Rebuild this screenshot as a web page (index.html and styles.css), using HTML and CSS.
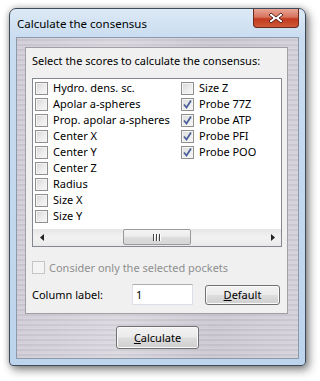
FILE: index.html
```html
<!DOCTYPE html>
<html>
<head>
<meta charset="utf-8">
<link rel="stylesheet" href="styles.css">
</head>
<body>
<div class="window">
  <div class="titlebar">
    <span class="title">Calculate the consensus</span>
    <div class="close">
      <svg width="16" height="12" viewBox="0 0 16 12">
        <path d="M3 1 L8 5 L13 1 L15 3 L11 6 L15 9 L13 11 L8 7 L3 11 L1 9 L5 6 L1 3 Z" fill="#fff" stroke="#5a2a22" stroke-width="1" stroke-linejoin="round"/>
      </svg>
    </div>
  </div>
  <div class="client">
    <div class="panel">
      <div class="prompt">Select the scores to calculate the consensus:</div>
      <div class="listbox">
        <div class="items">
          <div class="item"><span class="cb"></span>Hydro. dens. sc.</div>
          <div class="item"><span class="cb"></span>Apolar a-spheres</div>
          <div class="item"><span class="cb"></span>Prop. apolar a-spheres</div>
          <div class="item"><span class="cb"></span>Center X</div>
          <div class="item"><span class="cb"></span>Center Y</div>
          <div class="item"><span class="cb"></span>Center Z</div>
          <div class="item"><span class="cb"></span>Radius</div>
          <div class="item"><span class="cb"></span>Size X</div>
          <div class="item"><span class="cb"></span>Size Y</div>
          <div class="item"><span class="cb"></span>Size Z</div>
          <div class="item"><span class="cb checked"><svg width="11" height="11" viewBox="0 0 11 11"><path d="M2 5.5 L4.5 8.5 L9 1.5" fill="none" stroke="#4c6199" stroke-width="1.8"/></svg></span>Probe 77Z</div>
          <div class="item"><span class="cb checked"><svg width="11" height="11" viewBox="0 0 11 11"><path d="M2 5.5 L4.5 8.5 L9 1.5" fill="none" stroke="#4c6199" stroke-width="1.8"/></svg></span>Probe ATP</div>
          <div class="item"><span class="cb checked"><svg width="11" height="11" viewBox="0 0 11 11"><path d="M2 5.5 L4.5 8.5 L9 1.5" fill="none" stroke="#4c6199" stroke-width="1.8"/></svg></span>Probe PFI</div>
          <div class="item"><span class="cb checked"><svg width="11" height="11" viewBox="0 0 11 11"><path d="M2 5.5 L4.5 8.5 L9 1.5" fill="none" stroke="#4c6199" stroke-width="1.8"/></svg></span>Probe POO</div>
        </div>
        <div class="hscroll">
          <span class="arrow"><svg width="4" height="7" viewBox="0 0 4 7"><path d="M4 0 L0 3.5 L4 7 Z" fill="#222"/></svg></span>
          <div class="track">
            <div class="thumb"><span class="grip"></span><span class="grip"></span><span class="grip"></span></div>
          </div>
          <span class="arrow"><svg width="4" height="7" viewBox="0 0 4 7"><path d="M0 0 L4 3.5 L0 7 Z" fill="#222"/></svg></span>
        </div>
      </div>
      <div class="consider"><span class="cb disabled"></span>Consider only the selected pockets</div>
      <div class="labelrow">
        <span class="collabel">Column label:</span>
        <div class="input">1</div>
        <div class="button default-btn"><u>D</u>efault</div>
      </div>
    </div>
    <div class="footer">
      <div class="button calc-btn"><u>C</u>alculate</div>
    </div>
  </div>
</div>
</body>
</html>
```
FILE: styles.css
```css
html, body {
  margin: 0;
  padding: 0;
  background: #ffffff;
  width: 320px;
  height: 381px;
  overflow: hidden;
}
body {
  padding: 8px 0 0 9px;
  box-sizing: border-box;
  font-family: "Noto Sans", "Open Sans", sans-serif;
  font-size: 11px;
  color: #000;
}
.window {
  width: 297px;
  height: 358px;
  box-sizing: border-box;
  border: 1px solid #3e4a58;
  border-radius: 7px 7px 4px 4px;
  background: linear-gradient(180deg, #dce9f6 0px, #c9dcf0 30px, #bcd4ec 100%);
  box-shadow: 3px 4px 10px rgba(0, 0, 0, 0.45), 0 0 6px rgba(0, 0, 0, 0.25);
  display: flex;
  flex-direction: column;
  padding: 0 6px 6px 6px;
}
.titlebar {
  height: 28px;
  display: flex;
  align-items: flex-start;
  justify-content: space-between;
}
.title {
  margin-top: 7px;
  margin-left: 1px;
  font-size: 11.5px;
  line-height: 16px;
  color: #000;
}
.close {
  width: 46px;
  height: 19px;
  box-sizing: border-box;
  border: 1px solid #6b2a1e;
  border-top: none;
  border-radius: 0 0 4px 4px;
  background: linear-gradient(180deg, #e9a596 0%, #d8735e 45%, #c2391f 55%, #cf5a3a 100%);
  display: flex;
  align-items: center;
  justify-content: center;
}
.client {
  flex: 1;
  border: 1px solid #8b99ab;
  background-color: #cdcad4;
  background-image:
    repeating-linear-gradient(180deg, rgba(255,255,255,0.12) 0px, rgba(255,255,255,0.12) 1px, rgba(0,0,0,0.04) 1px, rgba(0,0,0,0.04) 3px, rgba(255,255,255,0.06) 3px, rgba(255,255,255,0.06) 5px),
    linear-gradient(90deg, #cfccd6 0%, #dad7df 35%, #cbc8d2 70%, #d3d0d9 100%);
  display: flex;
  flex-direction: column;
  padding: 9px 0 0 8px;
}
.panel {
  width: 263px;
  height: 267px;
  box-sizing: border-box;
  border: 1px solid #a0a0a4;
  background: #f0f0f0;
  padding: 5px 0 0 6px;
  display: flex;
  flex-direction: column;
}
.prompt {
  line-height: 16px;
  height: 16px;
}
.listbox {
  margin-top: 9px;
  width: 250px;
  height: 169px;
  box-sizing: border-box;
  border: 1px solid #828790;
  background: #fff;
  display: flex;
  flex-direction: column;
}
.items {
  flex: 1;
  display: grid;
  grid-template-rows: repeat(9, 16px);
  grid-auto-flow: column;
  grid-auto-columns: 146px;
  padding: 1px 0 0 2px;
  overflow: hidden;
}
.item {
  display: flex;
  align-items: center;
  white-space: nowrap;
  line-height: 16px;
}
.cb {
  width: 13px;
  height: 13px;
  box-sizing: border-box;
  border: 1px solid #8f8f8f;
  background: linear-gradient(135deg, #d8d8d8 0%, #ededed 60%, #f6f6f6 100%);
  box-shadow: inset 0 0 0 1px #f4f4f4;
  margin-right: 5px;
  flex: none;
  display: flex;
  align-items: center;
  justify-content: center;
}
.cb.checked {
  background: linear-gradient(135deg, #dcdcdc 0%, #f0f0f0 70%, #f8f8f8 100%);
}
.cb.disabled {
  border-color: #c5c5c5;
  background: #f4f4f4;
  box-shadow: none;
}
.hscroll {
  height: 17px;
  display: flex;
  align-items: center;
  background: linear-gradient(180deg, #e6e6e6 0%, #f2f2f2 50%, #eaeaea 100%);
}
.arrow {
  width: 17px;
  height: 17px;
  display: flex;
  align-items: center;
  justify-content: center;
  flex: none;
}
.track {
  flex: 1;
  height: 17px;
  padding-left: 73px;
}
.thumb {
  width: 68px;
  height: 16px;
  box-sizing: border-box;
  border: 1px solid #9a9a9a;
  border-radius: 2px;
  background: linear-gradient(180deg, #f4f4f4 0%, #ececec 45%, #dcdcdc 55%, #d6d6d6 100%);
  display: flex;
  align-items: center;
  justify-content: center;
  gap: 1px;
}
.grip {
  width: 1px;
  height: 7px;
  background: #444;
  box-shadow: 1px 0 0 #fff;
  margin: 0 1px 0 0;
}
.consider {
  margin-top: 12px;
  height: 16px;
  display: flex;
  align-items: center;
  color: #8e8f8f;
}
.consider .cb {
  margin-right: 4px;
}
.labelrow {
  margin-top: 9px;
  height: 21px;
  display: flex;
  align-items: center;
}
.collabel {
  width: 100px;
}
.input {
  width: 61px;
  height: 21px;
  box-sizing: border-box;
  border: 1px solid #dbdfe6;
  border-top-color: #abadb3;
  background: #fff;
  padding-left: 3px;
  line-height: 19px;
}
.button {
  box-sizing: border-box;
  border: 1px solid #707070;
  border-radius: 3px;
  background: linear-gradient(180deg, #f2f2f2 0%, #ebebeb 48%, #dddddd 52%, #cfcfcf 100%);
  box-shadow: inset 0 0 0 1px #fbfbfb;
  display: flex;
  align-items: center;
  justify-content: center;
  line-height: 16px;
}
.default-btn {
  margin-left: 12px;
  width: 75px;
  height: 20px;
}
.footer {
  display: flex;
  padding: 12px 0 0 91px;
}
.calc-btn {
  width: 83px;
  height: 23px;
}
```
